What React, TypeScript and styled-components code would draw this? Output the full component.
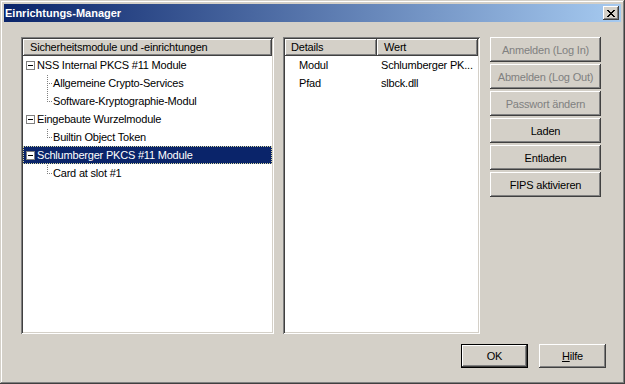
import React from "react";
import styled, { createGlobalStyle, css } from "styled-components";

const FACE = "#D4D0C8";
const SHADOW = "#808080";
const DARK = "#404040";

const GlobalStyle = createGlobalStyle`
  html, body { margin: 0; padding: 0; background: ${FACE}; }
  body { font-family: "Liberation Sans", Arial, sans-serif; font-size: 11px; letter-spacing: -0.2px; color: #000; }
  * { box-sizing: border-box; }
`;

const Window = styled.div`
  width: 625px;
  height: 384px;
  padding: 4px;
  display: flex;
  flex-direction: column;
  background: ${FACE};
  box-shadow: inset -1px -1px ${DARK}, inset 1px 1px ${FACE},
    inset -2px -2px ${SHADOW}, inset 2px 2px #fff;
`;

const TitleBar = styled.div`
  height: 18px;
  display: flex;
  align-items: center;
  justify-content: space-between;
  padding: 0 2px 0 1px;
  background: linear-gradient(to right, #0a246a, #a6caf0);
  color: #fff;
  font-weight: bold;
  font-size: 11px;
  letter-spacing: 0;
`;

const bevel = css`
  box-shadow: inset -1px -1px ${DARK}, inset 1px 1px #fff,
    inset -2px -2px ${SHADOW}, inset 2px 2px ${FACE};
`;

const CloseButton = styled.div`
  width: 16px;
  height: 14px;
  background: ${FACE};
  display: flex;
  align-items: center;
  justify-content: center;
  ${bevel}
`;

const Main = styled.div`
  display: flex;
  align-items: flex-start;
  padding: 15px 0 0 17px;
`;

const Panel = styled.div<{ $width: number; $mr: number }>`
  width: ${(p) => p.$width}px;
  margin-right: ${(p) => p.$mr}px;
  height: 297px;
  padding: 2px;
  background: #fff;
  display: flex;
  flex-direction: column;
  box-shadow: inset 1px 1px ${SHADOW}, inset -1px -1px #fff,
    inset 2px 2px ${DARK}, inset -2px -2px ${FACE};
`;

const HeaderRow = styled.div`
  display: flex;
  height: 17px;
  flex: none;
`;

const HeaderCell = styled.div<{ $width?: number; $pad: number }>`
  ${(p) => (p.$width ? `width: ${p.$width}px; flex: none;` : "flex: 1;")}
  height: 17px;
  line-height: 16px;
  padding-left: ${(p) => p.$pad}px;
  background: ${FACE};
  white-space: nowrap;
  overflow: hidden;
  box-shadow: inset -1px -1px ${DARK}, inset 1px 1px #fff,
    inset -2px -2px ${SHADOW};
`;

const TreeRow = styled.div<{ $selected?: boolean }>`
  height: 18px;
  display: flex;
  align-items: center;
  white-space: nowrap;
  background: ${(p) => (p.$selected ? "#0A246A" : "transparent")};
  color: ${(p) => (p.$selected ? "#fff" : "#000")};
  outline: ${(p) => (p.$selected ? "1px dotted #d8d8a0" : "none")};
  outline-offset: -1px;
`;

const Expander = styled.div`
  width: 9px;
  height: 9px;
  margin: 0 2px 0 3px;
  border: 1px solid ${SHADOW};
  background: #fff;
  display: flex;
  align-items: center;
  justify-content: center;
  flex: none;
`;

const Minus = styled.div`
  width: 5px;
  height: 1px;
  background: #000;
`;

const ConnectorSvg = styled.svg`
  margin-left: 24px;
  flex: none;
  display: block;
`;

const Label = styled.span`
  line-height: 18px;
`;

const ListRow = styled.div`
  display: flex;
  height: 18px;
  line-height: 18px;
  white-space: nowrap;
`;

const ListCell = styled.div<{ $width?: number; $pad: number }>`
  ${(p) => (p.$width ? `width: ${p.$width}px; flex: none;` : "flex: 1;")}
  padding-left: ${(p) => p.$pad}px;
  overflow: hidden;
`;

const ButtonColumn = styled.div`
  display: flex;
  flex-direction: column;
  gap: 2px;
`;

const Button = styled.div<{ $disabled?: boolean; $default?: boolean; $w: number; $h: number }>`
  width: ${(p) => p.$w}px;
  height: ${(p) => p.$h}px;
  display: flex;
  align-items: center;
  justify-content: center;
  background: ${FACE};
  color: ${(p) => (p.$disabled ? SHADOW : "#000")};
  white-space: nowrap;
  ${(p) =>
    p.$default
      ? css`
          box-shadow: inset 0 0 0 1px #000, inset -2px -2px ${DARK},
            inset 2px 2px #fff, inset -3px -3px ${SHADOW};
        `
      : bevel}
`;

const Footer = styled.div`
  display: flex;
  justify-content: flex-end;
  gap: 11px;
  margin-top: 10px;
  padding-right: 15px;
`;

function Connector({ last }: { last: boolean }) {
  const vEnd = last ? 9 : 18;
  return (
    <ConnectorSvg width="6" height="18" viewBox="0 0 6 18" shapeRendering="crispEdges">
      {Array.from({ length: Math.ceil(vEnd / 2) }).map((_, i) => (
        <rect key={"v" + i} x={0} y={i * 2 + 1} width={1} height={1} fill={SHADOW} />
      ))}
      {[2, 4].map((x) => (
        <rect key={"h" + x} x={x} y={9} width={1} height={1} fill={SHADOW} />
      ))}
    </ConnectorSvg>
  );
}

const tree = [
  { label: "NSS Internal PKCS #11 Module", children: ["Allgemeine Crypto-Services", "Software-Kryptographie-Modul"] },
  { label: "Eingebaute Wurzelmodule", children: ["Builtin Object Token"] },
  { label: "Schlumberger PKCS #11 Module", selected: true, children: ["Card at slot #1"] },
];

const details = [
  ["Modul", "Schlumberger PK..."],
  ["Pfad", "slbck.dll"],
];

const sideButtons: [string, boolean][] = [
  ["Anmelden (Log In)", true],
  ["Abmelden (Log Out)", true],
  ["Passwort ändern", true],
  ["Laden", false],
  ["Entladen", false],
  ["FIPS aktivieren", false],
];

export default function App() {
  return (
    <>
      <GlobalStyle />
      <Window>
        <TitleBar>
          <span>Einrichtungs-Manager</span>
          <CloseButton>
            <svg width="8" height="7" viewBox="0 0 8 7" shapeRendering="crispEdges">
              <path d="M0 0h2v1h-2zM6 0h2v1h-2zM1 1h2v1h-2zM5 1h2v1h-2zM2 2h4v1h-4zM3 3h2v1h-2zM2 4h4v1h-4zM1 5h2v1h-2zM5 5h2v1h-2zM0 6h2v1h-2zM6 6h2v1h-2z" fill="#000" />
            </svg>
          </CloseButton>
        </TitleBar>
        <Main>
          <Panel $width={253} $mr={9}>
            <HeaderRow>
              <HeaderCell $pad={7}>Sicherheitsmodule und -einrichtungen</HeaderCell>
            </HeaderRow>
            {tree.map((node) => (
              <React.Fragment key={node.label}>
                <TreeRow $selected={node.selected}>
                  <Expander>
                    <Minus />
                  </Expander>
                  <Label>{node.label}</Label>
                </TreeRow>
                {node.children.map((c, i) => (
                  <TreeRow key={c}>
                    <Connector last={i === node.children.length - 1} />
                    <Label>{c}</Label>
                  </TreeRow>
                ))}
              </React.Fragment>
            ))}
          </Panel>
          <Panel $width={197} $mr={10}>
            <HeaderRow>
              <HeaderCell $width={92} $pad={6}>Details</HeaderCell>
              <HeaderCell $pad={7}>Wert</HeaderCell>
            </HeaderRow>
            {details.map(([k, v]) => (
              <ListRow key={k}>
                <ListCell $width={92} $pad={14}>{k}</ListCell>
                <ListCell $pad={4}>{v}</ListCell>
              </ListRow>
            ))}
          </Panel>
          <ButtonColumn>
            {sideButtons.map(([t, d]) => (
              <Button key={t} $disabled={d} $w={111} $h={25}>
                {t}
              </Button>
            ))}
          </ButtonColumn>
        </Main>
        <Footer>
          <Button $default $w={67} $h={24}>OK</Button>
          <Button $w={67} $h={24}>
            <span>
              <u>H</u>ilfe
            </span>
          </Button>
        </Footer>
      </Window>
    </>
  );
}
